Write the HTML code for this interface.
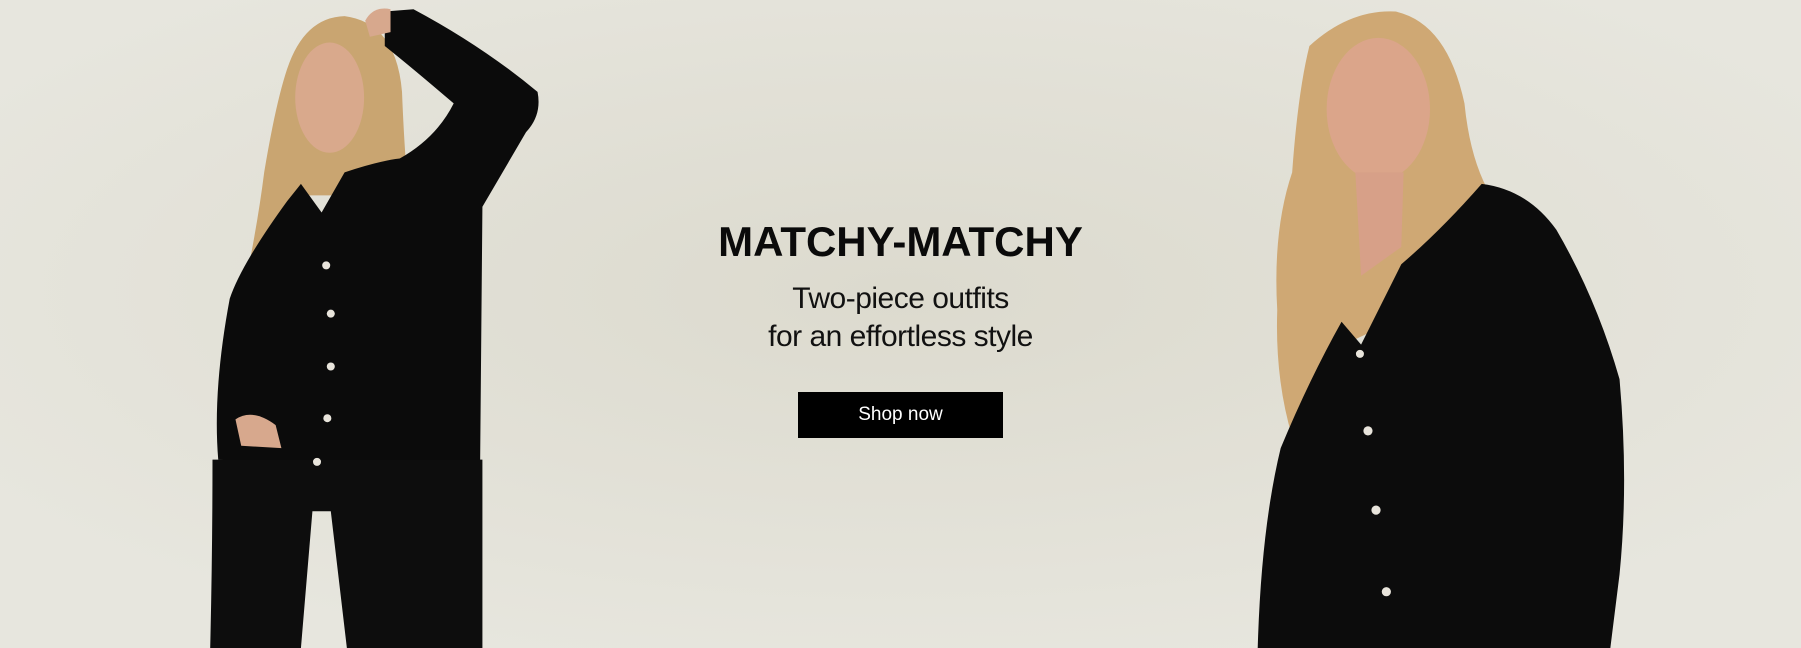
<!DOCTYPE html>
<html><head><meta charset="utf-8"><style>
html,body{margin:0;padding:0}
body{width:1801px;height:648px;overflow:hidden;position:relative;background:#e4e3db;font-family:"Liberation Sans",Arial,sans-serif}
svg{position:absolute;left:0;top:0}
.t{position:absolute;left:0;width:1801px;text-align:center;color:#0a0a0a}
h1{position:absolute;margin:0;left:0;width:1801px;top:217px;text-align:center;font-size:42px;font-weight:bold;line-height:50px;letter-spacing:0;color:#0a0a0a}
.sub{top:280px;font-size:30px;line-height:38px;letter-spacing:-0.5px;color:#111}
.btn{position:absolute;left:798px;top:392px;width:205px;height:46px;background:#000;color:#fff;font-size:19px;line-height:46px;text-align:center}
</style></head><body>
<svg width="1801" height="648" viewBox="0 0 1568 564" preserveAspectRatio="none">
<defs>
<radialGradient id="bg" cx="0.5" cy="0.45" r="0.6"><stop offset="0" stop-color="#dcdace"/><stop offset="1" stop-color="#e7e6de"/></radialGradient>
</defs>
<rect width="1568" height="564" fill="url(#bg)"/>
<!-- left model -->
<path d="M250,60 Q265,15 300,14 Q345,20 350,80 Q352,130 355,160 L330,170 L255,170 Q225,230 215,240 Q225,190 230,150 Q240,90 250,60Z" fill="#c9a571"/>
<ellipse cx="287" cy="85" rx="30" ry="48" fill="#d9a98c"/>
<path d="M335,10 L360,8 Q420,40 468,80 Q472,100 458,115 L420,180 L418,405 Q350,412 300,408 L190,400 Q185,340 200,260 Q210,230 250,175 L262,160 L280,185 L300,150 Q330,140 348,138 Q380,120 395,90 Q360,60 335,40Z" fill="#0b0b0b"/>
<path d="M185,400 L420,400 L420,564 L302,564 L288,445 L272,445 L262,564 L183,564 Q185,480 185,400Z" fill="#0d0d0d"/>
<path d="M205,365 Q220,355 240,370 L245,390 L210,388Z" fill="#d7a88d"/>
<path d="M318,18 Q325,5 340,8 L340,28 L322,32Z" fill="#d7a88d"/>
<g fill="#e9e5dc"><circle cx="284" cy="231" r="3.5"/><circle cx="288" cy="273" r="3.5"/><circle cx="288" cy="319" r="3.5"/><circle cx="285" cy="364" r="3.5"/><circle cx="276" cy="402" r="3.5"/></g>
<!-- right model -->
<path d="M1140,40 Q1175,8 1215,10 Q1260,20 1275,90 Q1280,140 1298,170 Q1285,220 1255,260 L1170,300 Q1140,360 1125,380 Q1110,330 1112,270 Q1108,200 1125,150 Q1130,80 1140,40Z" fill="#cfa874"/>
<ellipse cx="1200" cy="95" rx="45" ry="62" fill="#dba58a"/>
<path d="M1180,150 L1222,150 L1220,215 L1185,240Z" fill="#d7a088"/>
<path d="M1290,160 Q1330,165 1355,200 Q1390,260 1410,330 Q1418,420 1410,500 L1402,564 L1095,564 Q1098,460 1115,390 Q1140,330 1168,280 L1185,300 L1220,230 Q1255,200 1290,160Z" fill="#0c0c0c"/>
<g fill="#e9e5dc"><circle cx="1184" cy="308" r="3.5"/><circle cx="1191" cy="375" r="4"/><circle cx="1198" cy="444" r="4"/><circle cx="1207" cy="515" r="4"/></g>
</svg>
<h1>MATCHY-MATCHY</h1>
<div class="t sub">Two-piece outfits<br>for an effortless style</div>
<div class="btn">Shop now</div>
</body></html>
